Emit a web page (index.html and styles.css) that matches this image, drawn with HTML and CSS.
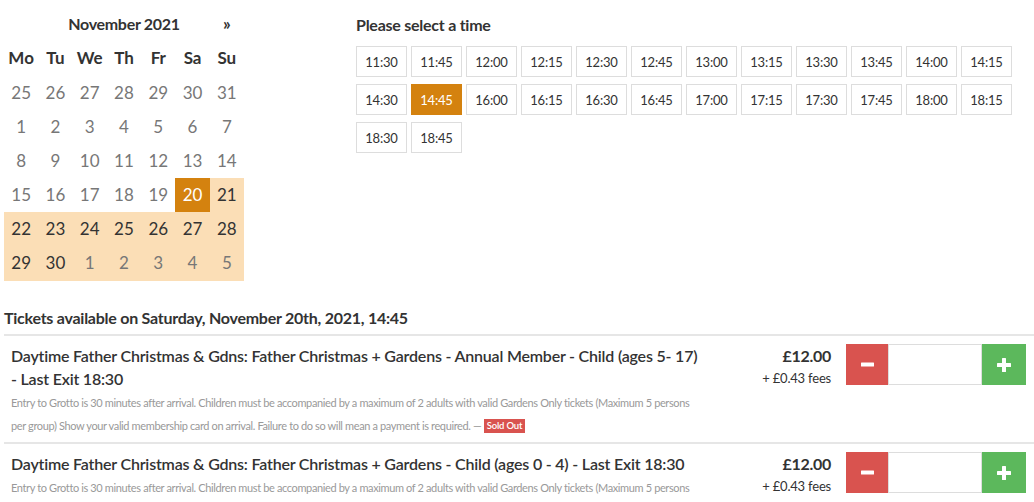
FILE: index.html
```html
<!DOCTYPE html>
<html>
<head>
<meta charset="utf-8">
<link rel="stylesheet" href="styles.css">
</head>
<body>
<div class="page">
  <div class="top">
    <table class="cal">
      <tr class="cal-head">
        <th></th>
        <th colspan="5" class="month">November 2021</th>
        <th class="next">»</th>
      </tr>
      <tr class="dow">
        <th>Mo</th><th>Tu</th><th>We</th><th>Th</th><th>Fr</th><th>Sa</th><th>Su</th>
      </tr>
      <tr class="first"><td class="old">25</td><td class="old">26</td><td class="old">27</td><td class="old">28</td><td class="old">29</td><td class="old">30</td><td class="old">31</td></tr>
      <tr><td>1</td><td>2</td><td>3</td><td>4</td><td>5</td><td>6</td><td>7</td></tr>
      <tr><td>8</td><td>9</td><td>10</td><td>11</td><td>12</td><td>13</td><td>14</td></tr>
      <tr><td>15</td><td>16</td><td>17</td><td>18</td><td>19</td><td class="sel">20</td><td class="range">21</td></tr>
      <tr><td class="range">22</td><td class="range">23</td><td class="range">24</td><td class="range">25</td><td class="range">26</td><td class="range">27</td><td class="range">28</td></tr>
      <tr class="last"><td class="range">29</td><td class="range">30</td><td class="range old">1</td><td class="range old">2</td><td class="range old">3</td><td class="range old">4</td><td class="range old">5</td></tr>
    </table>
    <div class="times">
      <h3 class="times-title">Please select a time</h3>
      <div class="time-grid">
        <button class="time">11:30</button><button class="time">11:45</button><button class="time">12:00</button><button class="time">12:15</button><button class="time">12:30</button><button class="time">12:45</button><button class="time">13:00</button><button class="time">13:15</button><button class="time">13:30</button><button class="time">13:45</button><button class="time">14:00</button><button class="time">14:15</button>
        <button class="time">14:30</button><button class="time active">14:45</button><button class="time">16:00</button><button class="time">16:15</button><button class="time">16:30</button><button class="time">16:45</button><button class="time">17:00</button><button class="time">17:15</button><button class="time">17:30</button><button class="time">17:45</button><button class="time">18:00</button><button class="time">18:15</button>
        <button class="time">18:30</button><button class="time">18:45</button>
      </div>
    </div>
  </div>

  <h3 class="tickets-title">Tickets available on Saturday, November 20th, 2021, 14:45</h3>

  <div class="ticket">
    <div class="info">
      <div class="name">Daytime Father Christmas &amp; Gdns: Father Christmas + Gardens - Annual Member - Child (ages 5- 17) - Last Exit 18:30</div>
      <div class="desc">Entry to Grotto is 30 minutes after arrival. Children must be accompanied by a maximum of 2 adults with valid Gardens Only tickets (Maximum 5 persons per group) Show your valid membership card on arrival. Failure to do so will mean a payment is required. — <span class="badge">Sold Out</span></div>
    </div>
    <div class="price">
      <div class="amount">£12.00</div>
      <div class="fees">+ £0.43 fees</div>
    </div>
    <div class="qty">
      <button class="qbtn minus"><svg width="13" height="13" viewBox="0 0 13 13"><rect x="0" y="4.5" width="13" height="4" rx="0.5" fill="#fff"/></svg></button>
      <input class="qinput" type="text">
      <button class="qbtn plus"><svg width="14" height="14" viewBox="0 0 14 14"><rect x="0" y="5" width="14" height="4" rx="0.5" fill="#fff"/><rect x="5" y="0" width="4" height="14" rx="0.5" fill="#fff"/></svg></button>
    </div>
  </div>

  <div class="ticket">
    <div class="info">
      <div class="name">Daytime Father Christmas &amp; Gdns: Father Christmas + Gardens - Child (ages 0 - 4) - Last Exit 18:30</div>
      <div class="desc">Entry to Grotto is 30 minutes after arrival. Children must be accompanied by a maximum of 2 adults with valid Gardens Only tickets (Maximum 5 persons per group)</div>
    </div>
    <div class="price">
      <div class="amount">£12.00</div>
      <div class="fees">+ £0.43 fees</div>
    </div>
    <div class="qty">
      <button class="qbtn minus"><svg width="13" height="13" viewBox="0 0 13 13"><rect x="0" y="4.5" width="13" height="4" rx="0.5" fill="#fff"/></svg></button>
      <input class="qinput" type="text">
      <button class="qbtn plus"><svg width="14" height="14" viewBox="0 0 14 14"><rect x="0" y="5" width="14" height="4" rx="0.5" fill="#fff"/><rect x="5" y="0" width="4" height="14" rx="0.5" fill="#fff"/></svg></button>
    </div>
  </div>
</div>
</body>
</html>
```

FILE: styles.css
```css
html, body {
  margin: 0;
  padding: 0;
  background: #fff;
}
body {
  font-family: Lato, "Noto Sans", sans-serif;
  color: #333;
  overflow: hidden;
}
.page {
  padding: 7px 0 0 4px;
}
.top {
  display: flex;
  align-items: flex-start;
}
.cal {
  border-collapse: collapse;
  width: 240px;
  table-layout: fixed;
  flex: none;
}
.cal th, .cal td {
  height: 34px;
  padding: 0;
  text-align: center;
  font-size: 17px;
  line-height: 34px;
  box-sizing: border-box;
}
.cal th {
  font-weight: 700;
  color: #333;
}
.cal .month {
  font-size: 16px;
  letter-spacing: -0.3px;
}
.cal tr.first td {
  height: 35px;
  padding-top: 1px;
}
.cal tr.last td {
  height: 35px;
  padding-bottom: 1px;
}
.cal td {
  color: #777;
}
.cal td.range {
  background: #fbdeb6;
  color: #333;
}
.cal td.range.old {
  color: #777;
}
.cal td.sel {
  background: #d4820f;
  color: #fff;
}
.times {
  margin-left: 112px;
}
.times-title {
  margin: 6px 0 9px;
  font-size: 16px;
  letter-spacing: -0.25px;
  line-height: 24px;
  font-weight: 700;
}
.time-grid {
  display: flex;
  flex-wrap: wrap;
  width: 660px;
  row-gap: 7px;
  column-gap: 4px;
}
.time {
  width: 51px;
  height: 31px;
  box-sizing: border-box;
  background: #fff;
  border: 1.5px solid #ddd;
  font-family: Lato, "Noto Sans", sans-serif;
  font-size: 13px;
  letter-spacing: -0.2px;
  color: #333;
  padding: 0;
  margin: 0;
}
.time.active {
  background: #d4820f;
  border-color: #d4820f;
  color: #fff;
}
.tickets-title {
  margin: 25px 0 0;
  padding-bottom: 4px;
  font-size: 16px;
  letter-spacing: -0.25px;
  line-height: 24px;
  font-weight: 700;
  border-bottom: 2px solid #e6e6e6;
}
.ticket {
  display: flex;
  align-items: flex-start;
  border-bottom: 2px solid #e6e6e6;
  padding: 8px 8px 5px 7px;
}
.info {
  width: 688px;
  flex: none;
}
.name {
  font-size: 16px;
  letter-spacing: -0.2px;
  line-height: 23px;
  font-weight: 600;
  color: #333;
}
.desc {
  margin-top: 1px;
  font-size: 11px;
  letter-spacing: -0.37px;
  line-height: 23px;
  color: #999;
}
.badge {
  display: inline-block;
  background: #d9534f;
  color: #fff;
  font-size: 9.5px;
  letter-spacing: -0.2px;
  line-height: 14px;
  padding: 0 3px;
  font-weight: 600;
  vertical-align: 1px;
}
.price {
  flex: 1;
  text-align: right;
}
.amount {
  font-size: 16px;
  letter-spacing: -0.3px;
  line-height: 23px;
  font-weight: 700;
}
.fees {
  font-size: 13px;
  letter-spacing: -0.2px;
  line-height: 23px;
}
.qty {
  display: flex;
  width: 180px;
  height: 41px;
  margin-left: 15px;
  flex: none;
}
.qbtn {
  height: 41px;
  border: none;
  padding: 0;
  margin: 0;
  display: flex;
  align-items: center;
  justify-content: center;
  flex: none;
}
.minus {
  background: #d9534f;
  width: 42px;
}
.plus {
  background: #5cb85c;
  width: 44px;
}
.qinput {
  flex: 1;
  min-width: 0;
  height: 41px;
  box-sizing: border-box;
  border: 1.5px solid #ddd;
  margin: 0;
  padding: 0;
}
```
